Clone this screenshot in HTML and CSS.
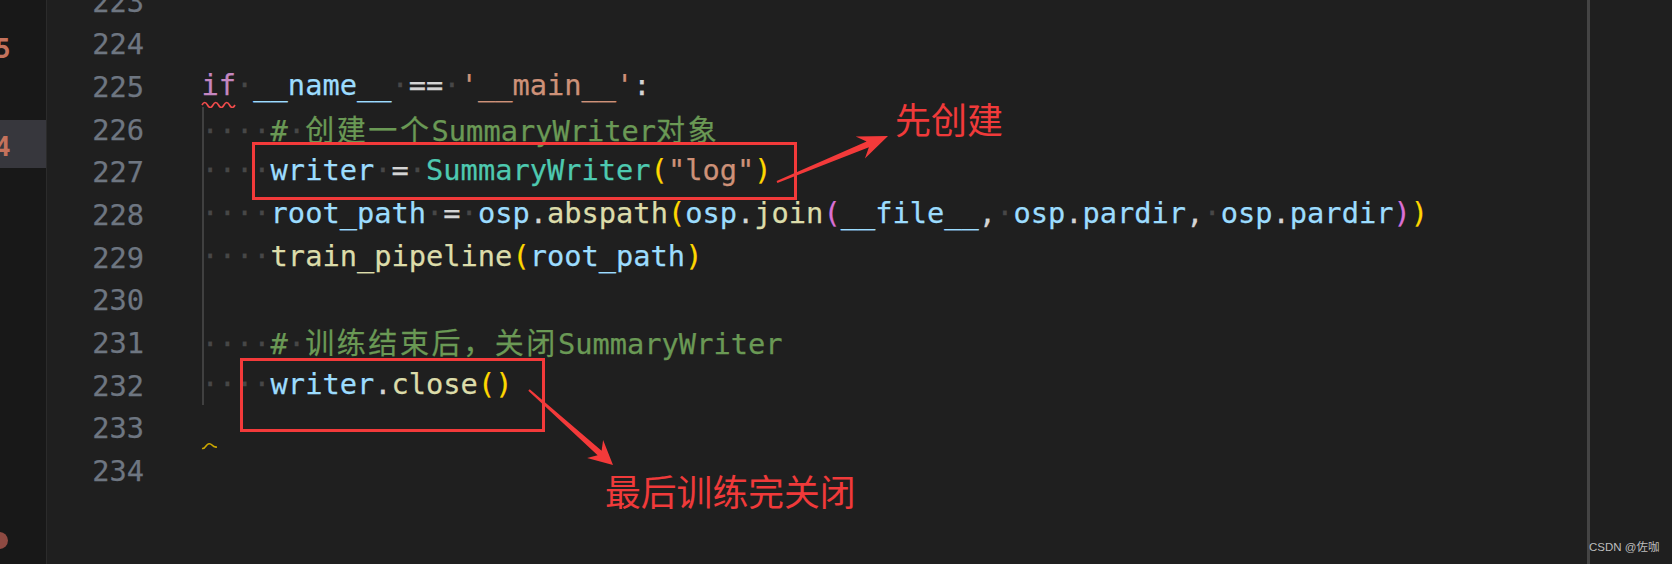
FILE: index.html
```html
<!DOCTYPE html>
<html lang="zh-CN">
<head>
    <meta charset="UTF-8">
    <title>SummaryWriter</title>
    <link rel="stylesheet" href="styles.css">
</head>
<body>
    <div class="editor">
        <div class="sidebar">
            <div class="sideRow top">5</div>
            <div class="sideRow active">4</div>
            <div class="sideDot"></div>
        </div>
        <div class="main">
            <div class="lines">
                <div class="line"><span class="ln">223</span><span class="code"></span></div>
                <div class="line"><span class="ln">224</span><span class="code"></span></div>
                <div class="line">
                    <span class="ln">225</span><span class="code"><span class="kw">if</span><span class="ws">·</span><span class="v">__name__</span><span class="ws">·</span>==<span class="ws">·</span><span class="s">'__main__'</span>:</span>
                    <svg class="squiggle" width="36" height="8" viewBox="0 0 36 8"><path d="M1 5 q2.75 -5 5.5 0 t5.5 0 t5.5 0 t5.5 0 t5.5 0 t5.5 0" fill="none" stroke="#f14c4c" stroke-width="1.6"/></svg>
                </div>
                <div class="line"><span class="ln">226</span><span class="code guide"><span class="ws">····</span><span class="c">#<span class="ws">·</span><span class="cjk">创建一个</span>SummaryWriter<span class="cjk">对象</span></span></span></div>
                <div class="line"><span class="ln">227</span><span class="code guide"><span class="ws">····</span><span class="v">writer</span><span class="ws">·</span>=<span class="ws">·</span><span class="cls">SummaryWriter</span><span class="b1">(</span><span class="s">"log"</span><span class="b1">)</span></span></div>
                <div class="line"><span class="ln">228</span><span class="code guide"><span class="ws">····</span><span class="v">root_path</span><span class="ws">·</span>=<span class="ws">·</span><span class="v">osp</span>.<span class="fn">abspath</span><span class="b1">(</span><span class="v">osp</span>.<span class="fn">join</span><span class="b2">(</span><span class="v">__file__</span>,<span class="ws">·</span><span class="v">osp</span>.<span class="v">pardir</span>,<span class="ws">·</span><span class="v">osp</span>.<span class="v">pardir</span><span class="b2">)</span><span class="b1">)</span></span></div>
                <div class="line"><span class="ln">229</span><span class="code guide"><span class="ws">····</span><span class="fn">train_pipeline</span><span class="b1">(</span><span class="v">root_path</span><span class="b1">)</span></span></div>
                <div class="line"><span class="ln">230</span><span class="code guide"></span></div>
                <div class="line"><span class="ln">231</span><span class="code guide"><span class="ws">····</span><span class="c">#<span class="ws">·</span><span class="cjk">训练结束后，关闭</span>SummaryWriter</span></span></div>
                <div class="line"><span class="ln">232</span><span class="code guide"><span class="ws">····</span><span class="v">writer</span>.<span class="fn">close</span><span class="b1">()</span></span></div>
                <div class="line">
                    <span class="ln">233</span><span class="code"></span>
                    <svg class="squiggle warn" width="18" height="8" viewBox="0 0 18 8"><path d="M1 6.5 Q3 7 5 4 Q8 0 11 3 Q13 5.5 16 5" fill="none" stroke="#cca700" stroke-width="1.6"/></svg>
                </div>
                <div class="line"><span class="ln">234</span><span class="code"></span></div>
            </div>
        </div>
        <div class="right"></div>
    </div>

    <!-- annotations drawn over the screenshot -->
    <svg class="marks" width="1672" height="564" viewBox="0 0 1672 564">
        <rect x="253.5" y="143.5" width="542" height="55" fill="none" stroke="#f33a3a" stroke-width="3"/>
        <rect x="241.5" y="359.5" width="302" height="71" fill="none" stroke="#f33a3a" stroke-width="3"/>
        <polygon points="777.4,182.9 868.9,147.2 864.9,158.6 888,136 855.7,136.4 866.6,141.6 776.6,181.1" fill="#f33a3a"/>
        <polygon points="528.3,390.8 597.6,455.2 587.1,458 613,465 603.1,440 601.6,450.8 529.7,389.3" fill="#f33a3a"/>
    </svg>
    <div class="note first">先创建</div>
    <div class="note last">最后训练完关闭</div>
    <div class="wm">CSDN @佐咖</div>
</body>
</html>
```

FILE: styles.css
```css
html, body {
    margin: 0;
    padding: 0;
}
body {
    width: 1672px;
    height: 564px;
    overflow: hidden;
    position: relative;
    background-color: #1f1f1f;
    font-family: "DejaVu Sans Mono", "Noto Sans CJK SC", monospace;
}
div.editor {
    display: flex;
    height: 564px;
}

/* left strip of the neighbouring pane */
div.sidebar {
    width: 46px;
    flex-shrink: 0;
    background-color: #181818;
    border-right: 1px solid #2b2b2b;
    display: flex;
    flex-direction: column;
    overflow: hidden;
    color: #c4725c;
    font-size: 26px;
    font-weight: bold;
}
div.sideRow {
    height: 48px;
    line-height: 54px;
    text-indent: -5px;
}
div.sideRow.top {
    margin-top: 22px;
}
div.sideRow.active {
    margin-top: 50px;
    background-color: #37373d;
}
div.sideDot {
    margin-top: auto;
    margin-bottom: 15px;
    margin-left: -9px;
    width: 17px;
    height: 17px;
    border-radius: 50%;
    background-color: #8e4a42;
}

/* editor */
div.main {
    flex: 1;
    overflow: hidden;
    font-size: 28.7px;
    -webkit-text-stroke: 0.25px currentColor;
}
div.lines {
    margin-top: -21.33px;
}
div.line {
    display: flex;
    height: 42.67px;
    line-height: 42.67px;
    position: relative;
}
span.ln {
    width: 97px;
    padding-right: 57.5px;
    padding-top: 2px;
    flex-shrink: 0;
    text-align: right;
    color: #6e7681;
}
span.code {
    flex: 1;
    white-space: pre;
    color: #d4d4d4;
}
span.code.guide {
    box-shadow: inset 2px 0 #404040;
}
span.ws { color: #474747; }
span.kw { color: #c586c0; }
span.v { color: #9cdcfe; }
span.s { color: #ce9178; }
span.c { color: #6a9955; }
span.cls { color: #4ec9b0; }
span.fn { color: #dcdcaa; }
span.b1 { color: #ffd700; }
span.b2 { color: #da70d6; }
span.cjk {
    font-family: "Noto Sans CJK SC", sans-serif;
    font-size: 29px;
    letter-spacing: 2.6px;
}
svg.squiggle {
    position: absolute;
    left: 154px;
    top: 36px;
}
svg.squiggle.warn {
    top: 36.5px;
}

div.right {
    width: 82px;
    flex-shrink: 0;
    border-left: 3px solid #444444;
}

/* red notes over the picture */
svg.marks {
    position: absolute;
    left: 0;
    top: 0;
}
div.note {
    position: absolute;
    color: #f03a3a;
    font-family: "Noto Sans CJK SC", sans-serif;
    font-size: 36px;
    line-height: 1;
    white-space: nowrap;
}
div.note.first {
    left: 895px;
    top: 100px;
}
div.note.last {
    left: 605px;
    top: 473px;
    font-size: 35.8px;
}
div.wm {
    position: absolute;
    left: 1589px;
    top: 542px;
    font-family: "Liberation Sans", "Noto Sans CJK SC", sans-serif;
    font-size: 11.5px;
    line-height: 1;
    color: #bdbdbd;
}
```
